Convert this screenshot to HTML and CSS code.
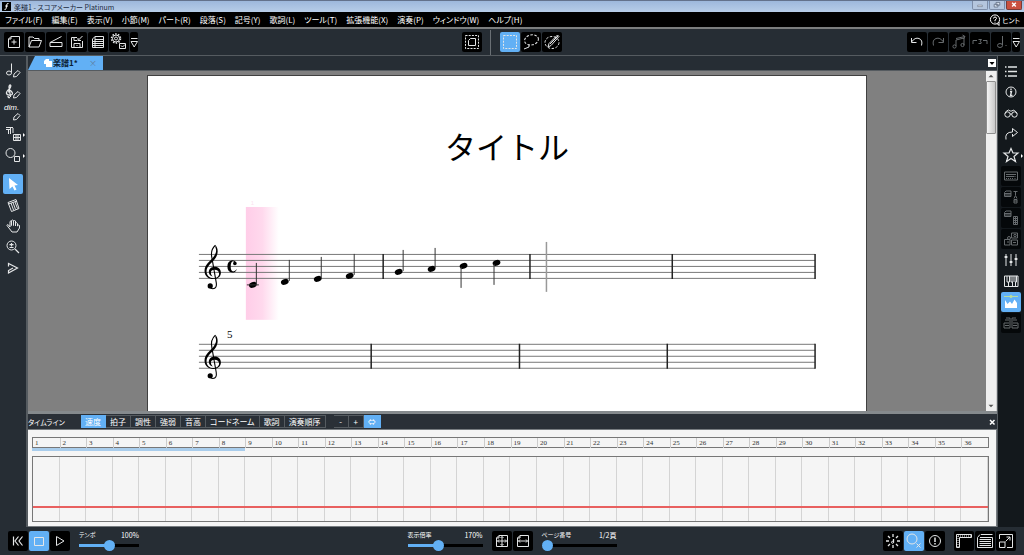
FILE: index.html
```html
<!DOCTYPE html>
<html lang="ja">
<head>
    <meta charset="UTF-8">
    <meta name="viewport" content="width=device-width, initial-scale=1.0">
    <title>楽譜1 - スコアメーカー Platinum</title>
    <link rel="stylesheet" href="styles.css">
</head>
<body>
    <header class="titlebar">
        <svg class="app-icon" viewBox="0 0 9 9"><rect width="9" height="9" fill="#000"/><path d="M6.5 1.5Q4.8 1 4.6 3.2L4.2 6.2Q4 7.8 2.5 7.4M3.2 4H6" stroke="#fff" fill="none"/></svg>
        <span class="title">楽譜1 - スコアメーカー Platinum</span>
        <div class="window-buttons">
            <button aria-label="最小化"><svg viewBox="0 0 15 8"><path d="M5 4.5H10V6H5Z" fill="#fff" stroke="#56647a" stroke-width=".6"/></svg></button>
            <button aria-label="元に戻す"><svg viewBox="0 0 15 8"><path d="M6.500 1.500H10.500V4.500H6.500ZM4.500 3.500H8.500V6.500H4.500Z" fill="#dde6f2" stroke="#56647a" stroke-width=".8"/></svg></button>
            <button class="close" aria-label="閉じる"><svg viewBox="0 0 15 8"><path d="M5.500 2L9.500 6M9.500 2L5.500 6" stroke="#fff" stroke-width="1.500"/></svg></button>
        </div>
    </header>

    <nav class="menubar">
        <a href="#">ファイル(F)</a>
        <a href="#">編集(E)</a>
        <a href="#">表示(V)</a>
        <a href="#">小節(M)</a>
        <a href="#">パート(R)</a>
        <a href="#">段落(S)</a>
        <a href="#">記号(Y)</a>
        <a href="#">歌詞(L)</a>
        <a href="#">ツール(T)</a>
        <a href="#">拡張機能(X)</a>
        <a href="#">演奏(P)</a>
        <a href="#">ウィンドウ(W)</a>
        <a href="#">ヘルプ(H)</a>
        <a href="#" class="hint"><svg viewBox="0 0 12 12"><circle cx="6" cy="5.500" r="4.600"/><path d="M4.500 4.500Q4.500 3 6 3T7.500 4.400Q7.500 5.200 6 6V7M6 7.800V8.600M8 9.500L10 11.500V8"/></svg>ヒント</a>
    </nav>

    <div class="toolbar">
        <div class="group">
            <button class="tool" aria-label="新規"><svg viewBox="0 0 20 20"><path d="M7 4.500H15.500V15.500H4.500V7ZM7 4.500V7H4.500M10 7.500V12.500M7.500 10H12.500"/></svg></button>
            <button class="tool" aria-label="開く"><svg viewBox="0 0 20 20"><path d="M4 15V5H8L9.500 6.500H14V8.500M4 15L6.500 8.500H16.500L14 15Z"/></svg></button>
            <button class="tool" aria-label="スキャン"><svg viewBox="0 0 20 20"><path d="M4 10.500L15.500 4.500M4 10.500H16V14.500H4Z"/></svg></button>
            <button class="tool" aria-label="保存"><svg viewBox="0 0 20 20"><path d="M10 5.500H4.500V15.500H15.500V9M7 5.500V8.500H10M7 15.500V11.500H13V15.500M15.500 4L11 8.500M11 6V8.500H14M10 13V14"/></svg></button>
            <button class="tool" aria-label="楽譜の設定"><svg viewBox="0 0 20 20"><path d="M7 4.500H15.500V15.500H4.500V7ZM7 7.500H15M5 9.500H15M5 11.500H15M5 13.500H15M7 4.500V15"/></svg></button>
            <button class="tool" aria-label="環境設定"><svg viewBox="0 0 20 20"><circle cx="7" cy="6.500" r="4.500" stroke-dasharray="1.500 1.330" stroke-width="1.500"/><circle cx="7" cy="6.500" r="3.500"/><circle cx="7" cy="6.500" r="1.500"/><path d="M10.500 11.500H16.500V16.500H10.500ZM12 13.500L13.500 15L16 12.500"/></svg></button>
            <button class="tool more" aria-label="その他"><svg viewBox="0 0 8 20"><path d="M1 6.500H7.500M1 9.500H7.500L4.200 15Z"/></svg></button>
        </div>
        <div class="group center">
            <button class="tool" aria-label="ページ選択"><svg viewBox="0 0 20 20"><path d="M3.500 3.500H16.500V16.500H3.500Z" stroke-dasharray="2 1.200"/><path d="M8.500 6.500H13.500V13.500H6.500V8.500Z"/></svg></button>
            <span class="divider"></span>
            <button class="tool active" aria-label="矩形選択"><svg viewBox="0 0 20 20"><path d="M3.500 3.500H16.500V16.500H3.500Z" stroke-dasharray="2 1.200"/></svg></button>
            <button class="tool" aria-label="投げ縄選択"><svg viewBox="0 0 20 20"><ellipse cx="10.500" cy="8" rx="7" ry="5" transform="rotate(-12 10 8)" stroke-dasharray="2.500 1.500"/><path d="M3 17L8 15V12.500" /></svg></button>
            <button class="tool" aria-label="ペン選択"><svg viewBox="0 0 20 20"><ellipse cx="10" cy="10.500" rx="7" ry="6" stroke-dasharray="2.500 1.500"/><path d="M6 15L7 11.500L15.500 3L17 4.500L9 13.500ZM8 12L16 4"/></svg></button>
        </div>
        <div class="group right">
            <button class="tool" aria-label="元に戻す"><svg viewBox="0 0 20 20"><path d="M4.500 10Q8 5 12 6.500T14.500 13.500M4.500 6V10.500H9.500"/></svg></button>
            <button class="tool off" aria-label="やり直し"><svg viewBox="0 0 20 20"><path d="M15.500 10Q12 5 8 6.500T5.500 13.500M15.500 6V10.500H10.500"/></svg></button>
            <button class="tool off" aria-label="連桁"><svg viewBox="0 0 20 20"><path d="M7 14V8L15 6V13M7 6.500L16 4.500M13.500 3L16 4.500L14.500 7"/><circle cx="5.500" cy="14.500" r="1.600"/><circle cx="13.500" cy="13" r="1.600"/></svg></button>
            <button class="tool off" aria-label="連符"><svg viewBox="0 0 20 20"><path d="M3 12V8.500H7M13 8.500H17V12M8.500 7.500H11.500L10 9.500Q12 10 11 11.500H8.500"/></svg></button>
            <button class="tool off" aria-label="音符"><svg viewBox="0 0 20 20"><path d="M11.500 4V13M15 13V14"/><ellipse cx="9" cy="13.500" rx="2.500" ry="2"/></svg></button>
            <button class="tool more" aria-label="その他"><svg viewBox="0 0 8 20"><path d="M1 6.500H7.500M1 9.500H7.500L4.200 15Z"/></svg></button>
        </div>
    </div>

    <main class="main">
        <aside class="side left">
            <button class="tool" aria-label="音符入力"><svg viewBox="0 0 20 20"><path d="M8.500 2.500V11.500"/><ellipse cx="6" cy="12" rx="2.500" ry="2"/><path d="M10.500 16L11 13L15 9.500L17 11.500L13.500 15.500Z"/></svg></button>
            <button class="tool" aria-label="記号入力"><svg viewBox="0 0 20 20"><path d="M7 15.500Q5 16 5 14M7.500 15L6 5Q6.500 2.500 7.500 3T6.500 7Q3 9.500 3.500 11.500T7.500 13T8.500 9.500T5.500 10.500" stroke-width="1.300"/><path d="M10.500 16L11 13L15 9.500L17 11.500L13.500 15.500Z"/></svg></button>
            <button class="tool" aria-label="文字入力"><svg viewBox="0 0 20 20"><text x="1" y="7" class="dim">dim.</text><path d="M10.500 17L11 14L15 10.500L17 12.500L13.500 16.500Z"/></svg></button>
            <button class="tool sub" aria-label="楽譜編集"><svg viewBox="0 0 20 20"><path d="M3 3.500H10M3 5.500H7M5.500 6V10M7.500 4V10M10 4V9"/><path d="M10.500 10.500H17.500V16.500H10.500ZM13 10V16M15 10V16M11 13.500H17"/></svg></button>
            <button class="tool sub" aria-label="図形"><svg viewBox="0 0 20 20"><circle cx="7.500" cy="8" r="4.500"/><path d="M11.500 11.500H16.500V16.500H11.500Z"/></svg></button>
            <button class="tool active gap" aria-label="選択"><svg viewBox="0 0 20 20"><path d="M6 4L15 11L11.500 11.500L13.500 15.500L11.500 16.500L9.500 12.500L6.500 15Z" fill="#fff" stroke="none"/></svg></button>
            <button class="tool" aria-label="消しゴム"><svg viewBox="0 0 20 20"><path d="M5 7.500L13 4.500L16 13.500L8.500 16.500ZM5.500 9L14 6M8 8L10.500 15M10 7.500L12.500 14.500M12 7L14.500 13.500"/></svg></button>
            <button class="tool" aria-label="手のひら"><svg viewBox="0 0 20 20"><path d="M7.500 14L4 9.500Q4 8 5.500 9L7 11V5.500Q8 4.500 8.500 5.500V9.500V4.500Q9.700 3.500 10.500 4.500V9.500V5Q11.500 4 12.500 5V10V7Q13.500 6 14.500 7.500V10Q16 8 16.500 9.500V12L14 16H9Z"/></svg></button>
            <button class="tool" aria-label="拡大縮小"><svg viewBox="0 0 20 20"><circle cx="8.500" cy="8.500" r="4.500"/><path d="M12 12L16 16M8.500 6V9.500M6.500 7.700H10.500M6.500 10.500H10.500" stroke-width="1.200"/></svg></button>
            <button class="tool" aria-label="再生位置"><svg viewBox="0 0 20 20"><path d="M5.500 8.500V5.500L14.500 10L5.500 15V12.500L10 10" stroke-width="1.200"/></svg></button>
        </aside>

        <section class="center-pane">
            <div class="tabbar">
                <a href="#" class="doc-tab"><svg viewBox="0 0 8 8"><path d="M2 0H5V2H8V8H2V5H0V2Z" fill="#fff"/></svg><b>楽譜1*</b><span class="tab-close">×</span></a>
                <button class="tab-list" aria-label="タブ一覧"><svg viewBox="0 0 8 8"><path d="M1.500 3H6.500L4 6Z"/></svg></button>
            </div>

            <div class="workspace">
                <div class="canvas">
                    <article class="sheet">
                        <h1>タイトル</h1>
                        <svg class="score" viewBox="0 0 719 190">
                            <defs>
                                <linearGradient id="glow"><stop offset="0" stop-color="#ffcde8"/><stop offset=".5" stop-color="#ffd9ed"/><stop offset="1" stop-color="#fff"/></linearGradient>
                                <symbol id="clef" viewBox="0 0 18 46" overflow="visible">
                                    <path d="M11.500 1C14.500 4.500 14.400 9.500 12 13.500C9 18.500 2.600 21.500 2.600 27.400C2.600 31.400 5.500 34.300 9.600 34.300C12.800 34.300 15.200 32.500 15.200 29.800C15.200 27.400 13.300 25.900 10.600 25.900C8.400 25.900 7 27 7 28.600C7 30.500 7.500 31.500 9 32.700C6.500 32.200 4.900 30.500 4.900 28.200C4.900 25 7.300 22.800 11 22.800C14.400 22.800 17 25.200 17 28.800C17 32.500 14 35.200 9.500 35.200C4.600 35.200 .6 32 .6 27C.6 20.500 6.500 17 9.500 13C12 9.800 13 6.500 11.500 3.500Z"/>
                                    <path d="M11.500 1.300Q6.200 6 8 14L12.300 38.500Q13.300 44.500 9 44.800Q7 44.700 5.500 43" fill="none" stroke="#000" stroke-width="1.100"/>
                                    <circle cx="6.300" cy="42" r="2.600"/>
                                </symbol>
                                <ellipse id="head" rx="4" ry="2.800" transform="rotate(-20)"/>
                            </defs>
                            <rect x="98" y="7" width="33" height="113" fill="url(#glow)"/>
                            <text x="103" y="5" class="beat">1</text>
                            <path class="staff" d="M51 54.500H668M51 60.500H668M51 66.500H668M51 72.500H668M51 78.500H668"/>
                            <path class="staff" d="M51 144.500H668M51 150.500H668M51 156.500H668M51 162.500H668M51 168.500H668"/>
                            <path class="barline" d="M235.500 54V79M382.500 54V79M525 54V79M668 54V79M223.500 144V169M372 144V169M520 144V169M668 144V169"/>
                            <use href="#clef" x="56" y="44" width="18" height="46"/>
                            <use href="#clef" x="56" y="134" width="18" height="46"/>
                            <path d="M88 62.500Q87 60.300 84.300 60.300Q79.500 61 79.500 66.500T84.300 72.700Q88 72.500 89 69Q87.300 71.500 85.300 71.500Q82.800 71 82.800 66.500T85 61.300Q86 61.300 86.500 62Z"/>
                            <circle cx="87" cy="63.500" r="1.800"/>
                            <use href="#head" transform="translate(105 85)"/>
                            <use href="#head" transform="translate(137 82)"/>
                            <use href="#head" transform="translate(170 79)"/>
                            <use href="#head" transform="translate(202 76)"/>
                            <use href="#head" transform="translate(251 72)"/>
                            <use href="#head" transform="translate(284 69)"/>
                            <use href="#head" transform="translate(316 66)"/>
                            <use href="#head" transform="translate(349 63)"/>
                            <path class="stem" d="M99 85H111M108.500 84V63M141.500 81V60M173.500 78V57M206.500 75V54M255.500 71V50M287.500 68V48M313.500 67V88M346.500 64V85"/>
                            <path class="cursor" d="M399 42V92"/>
                            <text x="79" y="138" class="bar-number">5</text>
                        </svg>
                    </article>
                </div>
                <div class="scrollbar">
                    <button aria-label="上へ"><svg viewBox="0 0 8 8"><path d="M2 5H6L4 3Z"/></svg></button>
                    <span class="scroll-thumb"></span>
                    <button aria-label="下へ"><svg viewBox="0 0 8 8"><path d="M2 3H6L4 5Z"/></svg></button>
                </div>
            </div>

            <section class="timeline">
                <div class="timeline-head">
                    <h2>タイムライン</h2>
                    <div class="modes">
                        <button class="active">速度</button>
                        <button>拍子</button>
                        <button>調性</button>
                        <button>強弱</button>
                        <button>音高</button>
                        <button>コードネーム</button>
                        <button>歌詞</button>
                        <button>演奏順序</button>
                    </div>
                    <div class="modes">
                        <button>-</button>
                        <button>+</button>
                        <button class="active">⇔</button>
                    </div>
                    <button class="panel-close" aria-label="閉じる"><svg viewBox="0 0 8 8"><path d="M2 2L6.500 6.500M6.500 2L2 6.500"/></svg></button>
                </div>
                <div class="timeline-body">
                    <div class="ruler">
                        <span>1</span><span>2</span><span>3</span><span>4</span><span>5</span><span>6</span><span>7</span><span>8</span><span>9</span>
                        <span>10</span><span>11</span><span>12</span><span>13</span><span>14</span><span>15</span><span>16</span><span>17</span><span>18</span>
                        <span>19</span><span>20</span><span>21</span><span>22</span><span>23</span><span>24</span><span>25</span><span>26</span><span>27</span>
                        <span>28</span><span>29</span><span>30</span><span>31</span><span>32</span><span>33</span><span>34</span><span>35</span><span>36</span>
                    </div>
                    <div class="range"></div>
                    <div class="graph"><div class="tempo-line"></div></div>
                </div>
            </section>
        </section>

        <aside class="side right">
            <button class="tool" aria-label="一覧"><svg viewBox="0 0 20 20"><path d="M7 6H16M7 10.500H16M7 15H16M4 6H5.500M4 10.500H5.500M4 15H5.500" stroke-width="1.300"/></svg></button>
            <button class="tool" aria-label="情報"><svg viewBox="0 0 20 20"><circle cx="10" cy="10" r="5"/><path d="M10 6.500V8M9 9.500H10.500L9.500 13.500H11.500" stroke-width="1.400"/></svg></button>
            <button class="tool" aria-label="検索"><svg viewBox="0 0 20 20"><circle cx="6.500" cy="11.500" r="2.700"/><circle cx="13.500" cy="11.500" r="2.700"/><path d="M4 10.500Q5 7.500 7.500 7Q9 8.500 11 8Q12 6.500 13.500 7.500T16 10.500M9 11H11"/></svg></button>
            <button class="tool" aria-label="移動"><svg viewBox="0 0 20 20"><path d="M5 15.500Q3.500 8 11.500 8V4.500L16.500 8.500L11.500 12.500V10"/></svg></button>
            <button class="tool sub" aria-label="お気に入り"><svg viewBox="0 0 20 20"><path d="M10 3.500L12 8H17L13 11.500L14.500 16.500L10 13.500L5.500 16.500L7 11.500L3 8H8Z" stroke-width="1.200"/></svg></button>
            <button class="tool off" aria-label="キーボード"><svg viewBox="0 0 20 20"><path d="M3.500 6H16.500V14H3.500ZM5 8.500H15M5 10.500H13" /><path d="M5 12.500H13M14 10V13" stroke-dasharray="1 1"/></svg></button>
            <button class="tool off" aria-label="TABパレット"><svg viewBox="0 0 20 20"><path d="M5 4H10V9.500H3.500V5.500ZM4 6.500H10M4 8H10M12.500 4.500H16.500M14.500 4.500V8M13 11.500L14.500 8.500L16 11.500M13 12.500H16V16H13ZM13 14H16"/></svg></button>
            <button class="tool off" aria-label="歌詞パレット"><svg viewBox="0 0 20 20"><path d="M5 3H10V8.500H3.500V4.500ZM4 5.500H10M4 7H10M12.500 8.500H16.500V16.500H12.500ZM12 10.500H17M12 12.500H17M12 14.500H17M14.500 8V17"/></svg></button>
            <button class="tool off" aria-label="コードパレット"><svg viewBox="0 0 20 20"><path d="M10.500 4H16.500V9H10.500ZM3.500 10.500H9V16H3.500ZM10.500 11H16.500V16H10.500Z"/><circle cx="8" cy="9" r="1.500"/><circle cx="14" cy="6.500" r="1.200"/><path d="M6 13H8M12 13.500H15"/></svg></button>
            <button class="tool" aria-label="ミキサー"><svg viewBox="0 0 20 20"><path d="M5 4V16M10 4V16M15 4V16" /><path d="M5 6V8M10 11V13M15 8V10" stroke-width="2.800"/></svg></button>
            <button class="tool" aria-label="鍵盤"><svg viewBox="0 0 20 20"><path d="M3.500 5V15.500H17V5ZM7.500 11V15M11.500 11V15M14.500 11V15M6 5V11H8.500V5M10 5V11H12V5M14 5V11H15.500V5"/></svg></button>
            <button class="tool active" aria-label="タイムライン"><svg viewBox="0 0 20 20"><path d="M4 16V8L6.500 12L9 9.500L11 12L13.500 7.500L16 11V16Z" fill="#fff" stroke="none"/><path d="M3 4.500H17" stroke="#b8dc9a"/><circle cx="10" cy="4.500" r="1.200" stroke="#b8dc9a"/></svg></button>
            <button class="tool off" aria-label="比較"><svg viewBox="0 0 20 20"><path d="M5 5H9V15H3V10H8M15 5H11V15H17V10H12M4 7H8M12 7H16M4 12.500H8M12 12.500H16"/></svg></button>
        </aside>
    </main>

    <footer class="statusbar">
        <div class="group">
            <button class="tool" aria-label="先頭へ"><svg viewBox="0 0 20 20"><path d="M5.500 5.500V14.500M10.500 5.500L7 10L10.500 14.500M14.500 5.500L11 10L14.500 14.500" stroke-width="1.200"/></svg></button>
            <button class="tool active" aria-label="停止"><svg viewBox="0 0 20 20"><path d="M5.500 6.500H14.500V14.500H5.500Z"/></svg></button>
            <button class="tool" aria-label="再生"><svg viewBox="0 0 20 20"><path d="M6.500 5.500L14 10L6.500 14.500Z"/></svg></button>
            <div class="slider short">
                <label for="tempo">テンポ</label><output for="tempo">100%</output>
                <input type="range" id="tempo" min="0" max="200" value="100" style="--fill: 50%">
            </div>
        </div>
        <div class="group center">
            <div class="slider">
                <label for="zoom">表示倍率</label><output for="zoom">170%</output>
                <input type="range" id="zoom" min="0" max="425" value="170" style="--fill: 40%">
            </div>
            <button class="tool" aria-label="全体表示"><svg viewBox="0 0 20 20"><path d="M7 4.500H15.500V15.500H4.500V7ZM7 4.500V7H4.500M10 5.500V14.500M5.500 10H14.500M8.500 7L10 5.500L11.500 7M8.500 13L10 14.500L11.500 13M7 8.500L5.500 10L7 11.500M13 8.500L14.500 10L13 11.500"/></svg></button>
            <button class="tool" aria-label="幅に合わせる"><svg viewBox="0 0 20 20"><path d="M7 4.500H15.500V15.500H4.500V7ZM7 4.500V7H4.500M5.500 10H14.500M7 8.500L5.500 10L7 11.500M13 8.500L14.500 10L13 11.500"/></svg></button>
            <div class="slider last">
                <label for="page">ページ番号</label><output for="page">1/2頁</output>
                <input type="range" id="page" min="1" max="2" value="1" style="--fill: 0%">
            </div>
        </div>
        <div class="group right">
            <button class="tool" aria-label="メトロノーム"><svg viewBox="0 0 20 20"><path d="M10 3V6M10 14V17M3 10H6M14 10H17M5 5L7 7M15 5L13 7M5 15L7 13M15 15L13 13M10.500 8V11.500" stroke-width="1.300"/><circle cx="9.500" cy="11.300" r="1"/></svg></button>
            <button class="tool active" aria-label="選択解除"><svg viewBox="0 0 20 20"><circle cx="8" cy="8" r="5"/><path d="M12.500 12.500L16.500 16.500M16.500 12.500L12.500 16.500"/></svg></button>
            <button class="tool" aria-label="注意"><svg viewBox="0 0 20 20"><circle cx="10" cy="10" r="5.500"/><path d="M10 6.500V11M10 12V13.500" stroke-width="1.500"/></svg></button>
            <button class="tool apart" aria-label="定規"><svg viewBox="0 0 20 20"><path d="M2.500 3.500H17.500V6.500H5.500V16.500H2.500Z"/><path d="M4 5H17M4 5V16" stroke-dasharray="1 1"/></svg></button>
            <button class="tool" aria-label="譜面"><svg viewBox="0 0 20 20"><path d="M6 3.500H17.500M2.500 6.500L5 3.500M2.500 6.500V16.500H17.500V6.500H5M4.500 8.500H16M4.500 10.500H16M4.500 12.500H16M4.500 14.500H16"/></svg></button>
            <button class="tool" aria-label="全画面"><svg viewBox="0 0 20 20"><path d="M3.500 8V3.500H16.500V16.500H11M3.500 11H9V16.500H3.500ZM9.500 10.500L14 6M10.500 6H14V9.500"/></svg></button>
        </div>
    </footer>
</body>
</html>
```

FILE: styles.css
```css
* {
    box-sizing: border-box;
}
body {
    margin: 0;
    height: 100vh;
    display: flex;
    flex-direction: column;
    overflow: hidden;
    background: #262d34;
    color: #fff;
    font-family: "Noto Sans CJK JP", sans-serif;
    font-size: 8px;
    font-feature-settings: "palt";
}
button {
    margin: 0;
    padding: 0;
    border: 0;
    background: none;
    color: inherit;
    font: inherit;
    font-feature-settings: inherit;
}
a {
    color: inherit;
    text-decoration: none;
}
svg {
    display: block;
}

/* title bar */
.titlebar {
    display: flex;
    align-items: center;
    height: 12px;
    padding: 0 2px;
    border-top: 1px solid #63728c;
    background: linear-gradient(#9db8dc, #b7cde8);
    color: #1b2a40;
}
.app-icon {
    width: 9px;
    height: 9px;
    margin-right: 3px;
}
.title {
    flex: 1;
    font-size: 7px;
    line-height: 10px;
}
.window-buttons {
    display: flex;
    gap: 1px;
    height: 9px;
    align-self: flex-start;
}
.window-buttons button {
    width: 16px;
    border: 1px solid #7d8da8;
    border-top: 0;
    border-radius: 0 0 2px 2px;
    background: #b5c6de;
}
.window-buttons .close {
    border-color: #7a3a35;
    background: #c9503f;
}

/* menu */
.menubar {
    display: flex;
    align-items: center;
    gap: 9px;
    height: 17px;
    padding: 0 4px 0 5px;
    border-bottom: 2px solid #7b7d7e;
    background: #000;
    line-height: 14px;
    white-space: nowrap;
}
.hint {
    display: flex;
    align-items: center;
    margin-left: auto;
    font-size: 7px;
}
.hint svg {
    width: 12px;
    height: 12px;
    margin-right: 1px;
    fill: none;
    stroke: #fff;
}

/* tool buttons */
.toolbar,
.statusbar {
    display: grid;
    grid-template-columns: 1fr auto 1fr;
    align-items: center;
    flex: none;
}
.toolbar {
    height: 27px;
    padding: 0 4px;
    border-bottom: 1px solid #555b60;
}
.group {
    display: flex;
    align-items: center;
    gap: 1px;
}
.group.right {
    justify-content: flex-end;
}
.tool {
    flex: none;
    width: 20px;
    height: 20px;
    border-radius: 2px;
    background: #000;
}
.tool svg {
    width: 100%;
    height: 100%;
    fill: none;
    stroke: #e4e6e7;
}
.tool.more {
    width: 8px;
}
.tool.off svg {
    stroke: #666a6d;
}
.tool.active {
    background: #62b0f5;
}
.divider {
    width: 1px;
    height: 25px;
    margin: 0 8px 0 7px;
    background: #6a7075;
}

/* main area */
.main {
    display: flex;
    flex: 1;
    min-height: 0;
}
.side {
    display: flex;
    flex-direction: column;
    align-items: center;
    gap: 1px;
    width: 26px;
    padding-top: 5px;
}
.side.right {
    background: #13181c;
}
.side .tool {
    position: relative;
    background: none;
}
.side .tool.active {
    background: #62b0f5;
}
.side.left .gap {
    margin-top: 8px;
}
.side.right .off {
    background: #05080a;
}
.tool.sub::after {
    content: "";
    position: absolute;
    right: -2px;
    top: 9px;
    border: 2px solid transparent;
    border-left-color: #fff;
    border-right: 0;
}
.dim {
    fill: #fff;
    stroke: none;
    font: italic 8px "Liberation Sans", sans-serif;
}
.center-pane {
    display: flex;
    flex-direction: column;
    flex: 1;
    min-width: 0;
    border-left: 2px solid #555b60;
    border-right: 1px solid #555b60;
}

/* document tabs */
.tabbar {
    display: flex;
    align-items: center;
    justify-content: space-between;
    height: 15px;
    padding-right: 1px;
    border-bottom: 1px solid #555b60;
}
.doc-tab {
    display: flex;
    align-items: center;
    width: 75px;
    height: 14px;
    padding: 0 6px 0 16px;
    background: #62b0f5;
    clip-path: polygon(7px 0, 100% 0, 100% 100%, 0 100%);
    color: #0b2036;
    line-height: 14px;
}
.doc-tab svg {
    width: 8px;
    height: 8px;
    margin-right: 1px;
}
.tab-close {
    margin-left: auto;
    color: #5f7f9e;
}
.tab-list {
    width: 8px;
    height: 8px;
    background: #fff;
}

/* score sheet */
.workspace {
    display: flex;
    flex: 1;
    min-height: 0;
}
.canvas {
    flex: 1;
    padding-top: 4px;
    overflow: hidden;
    background: #808080;
}
.sheet {
    width: 720px;
    height: 1018px;
    margin: 0 auto;
    padding-top: 46px;
    border: 1px solid #404040;
    background: #fff;
    color: #000;
}
.sheet h1 {
    margin: 0 0 30px;
    font-size: 31px;
    font-weight: 400;
    line-height: 48px;
    text-align: center;
    font-feature-settings: normal;
}
.score {
    width: 100%;
    overflow: visible;
}
.staff {
    stroke: #777;
}
.barline {
    stroke: #222;
    stroke-width: 1.5;
}
.stem {
    stroke: #333;
}
.cursor {
    stroke: #999;
    stroke-width: 1.5;
}
.bar-number {
    font: 11px "Liberation Serif", serif;
}
.beat {
    fill: #fbe3ef;
    font: 6px "Liberation Sans", sans-serif;
}
.scrollbar {
    display: flex;
    flex-direction: column;
    width: 11px;
    border-right: 1px solid #d0d0d0;
    background: #efefef;
}
.scrollbar button {
    height: 10px;
    fill: #555;
}
.scrollbar button:last-child {
    margin-top: auto;
}
.scroll-thumb {
    height: 53px;
    border: 1px solid #8f8f8f;
    border-radius: 1px;
    background: linear-gradient(90deg, #f4f4f4, #c8c8c8);
}

/* timeline */
.timeline {
    border-top: 3px solid #858a8d;
}
.timeline-head {
    display: flex;
    align-items: center;
    gap: 8px;
    height: 15px;
    padding-right: 1px;
    background: #2a3037;
}
.timeline-head h2 {
    width: 45px;
    margin: 0;
    font-size: 7px;
    font-weight: 400;
    white-space: nowrap;
}
.modes {
    display: flex;
}
.modes button {
    min-width: 15px;
    height: 13px;
    padding: 0 4px;
    border: 1px solid #555b60;
    border-left: 0;
    line-height: 11px;
}
.modes .active {
    border-color: #62b0f5;
    background: #62b0f5;
}
.panel-close {
    width: 8px;
    height: 8px;
    margin-left: auto;
}
.panel-close svg {
    stroke: #fff;
    stroke-width: 1.5;
}
.timeline-body {
    padding: 7px 7px 4px 4px;
    border: 1px solid #777c80;
    border-left: 0;
    background: #f5f5f5;
    color: #333;
}
.ruler {
    display: grid;
    grid-template-columns: repeat(36, 1fr);
    height: 11px;
    border: 1px solid #777;
    font: 7px "Liberation Serif", serif;
    line-height: 10px;
}
.ruler span {
    padding-left: 2px;
    border-left: 1px solid #ccc;
}
.ruler span:first-child {
    border-left: 0;
}
.range {
    width: calc(100% * 8 / 36);
    height: 3px;
    background: #a9cdec;
}
.graph {
    height: 66px;
    margin-top: 5px;
    padding-top: 49px;
    border: 1px solid #777;
    background: repeating-linear-gradient(90deg, transparent 0, transparent calc(100% / 36 - 1px), #d4d4d4 calc(100% / 36 - 1px), #d4d4d4 calc(100% / 36));
}
.tempo-line {
    height: 2px;
    background: #e8605f;
}

/* status bar */
.statusbar {
    height: 28px;
    padding: 0 8px;
}
.slider {
    display: grid;
    grid-template-columns: 1fr 1fr;
    width: 75px;
    margin-right: 8px;
    font-size: 7px;
    line-height: 8px;
    white-space: nowrap;
}
.slider.short {
    width: 60px;
    margin-left: 8px;
}
.slider.last {
    margin: 0 0 0 8px;
}
.slider label {
    font-size: 6px;
}
.slider output {
    text-align: right;
}
.slider input {
    grid-column: 1 / 3;
    width: 100%;
    min-width: 0;
    height: 12px;
    margin: 0;
    appearance: none;
    background: linear-gradient(90deg, #62b0f5 var(--fill), #000 var(--fill)) center / 100% 3px no-repeat;
}
.slider input::-webkit-slider-thumb {
    appearance: none;
    width: 11px;
    height: 11px;
    border-radius: 50%;
    background: #62b0f5;
}
.apart {
    margin-left: 8px;
}
```
